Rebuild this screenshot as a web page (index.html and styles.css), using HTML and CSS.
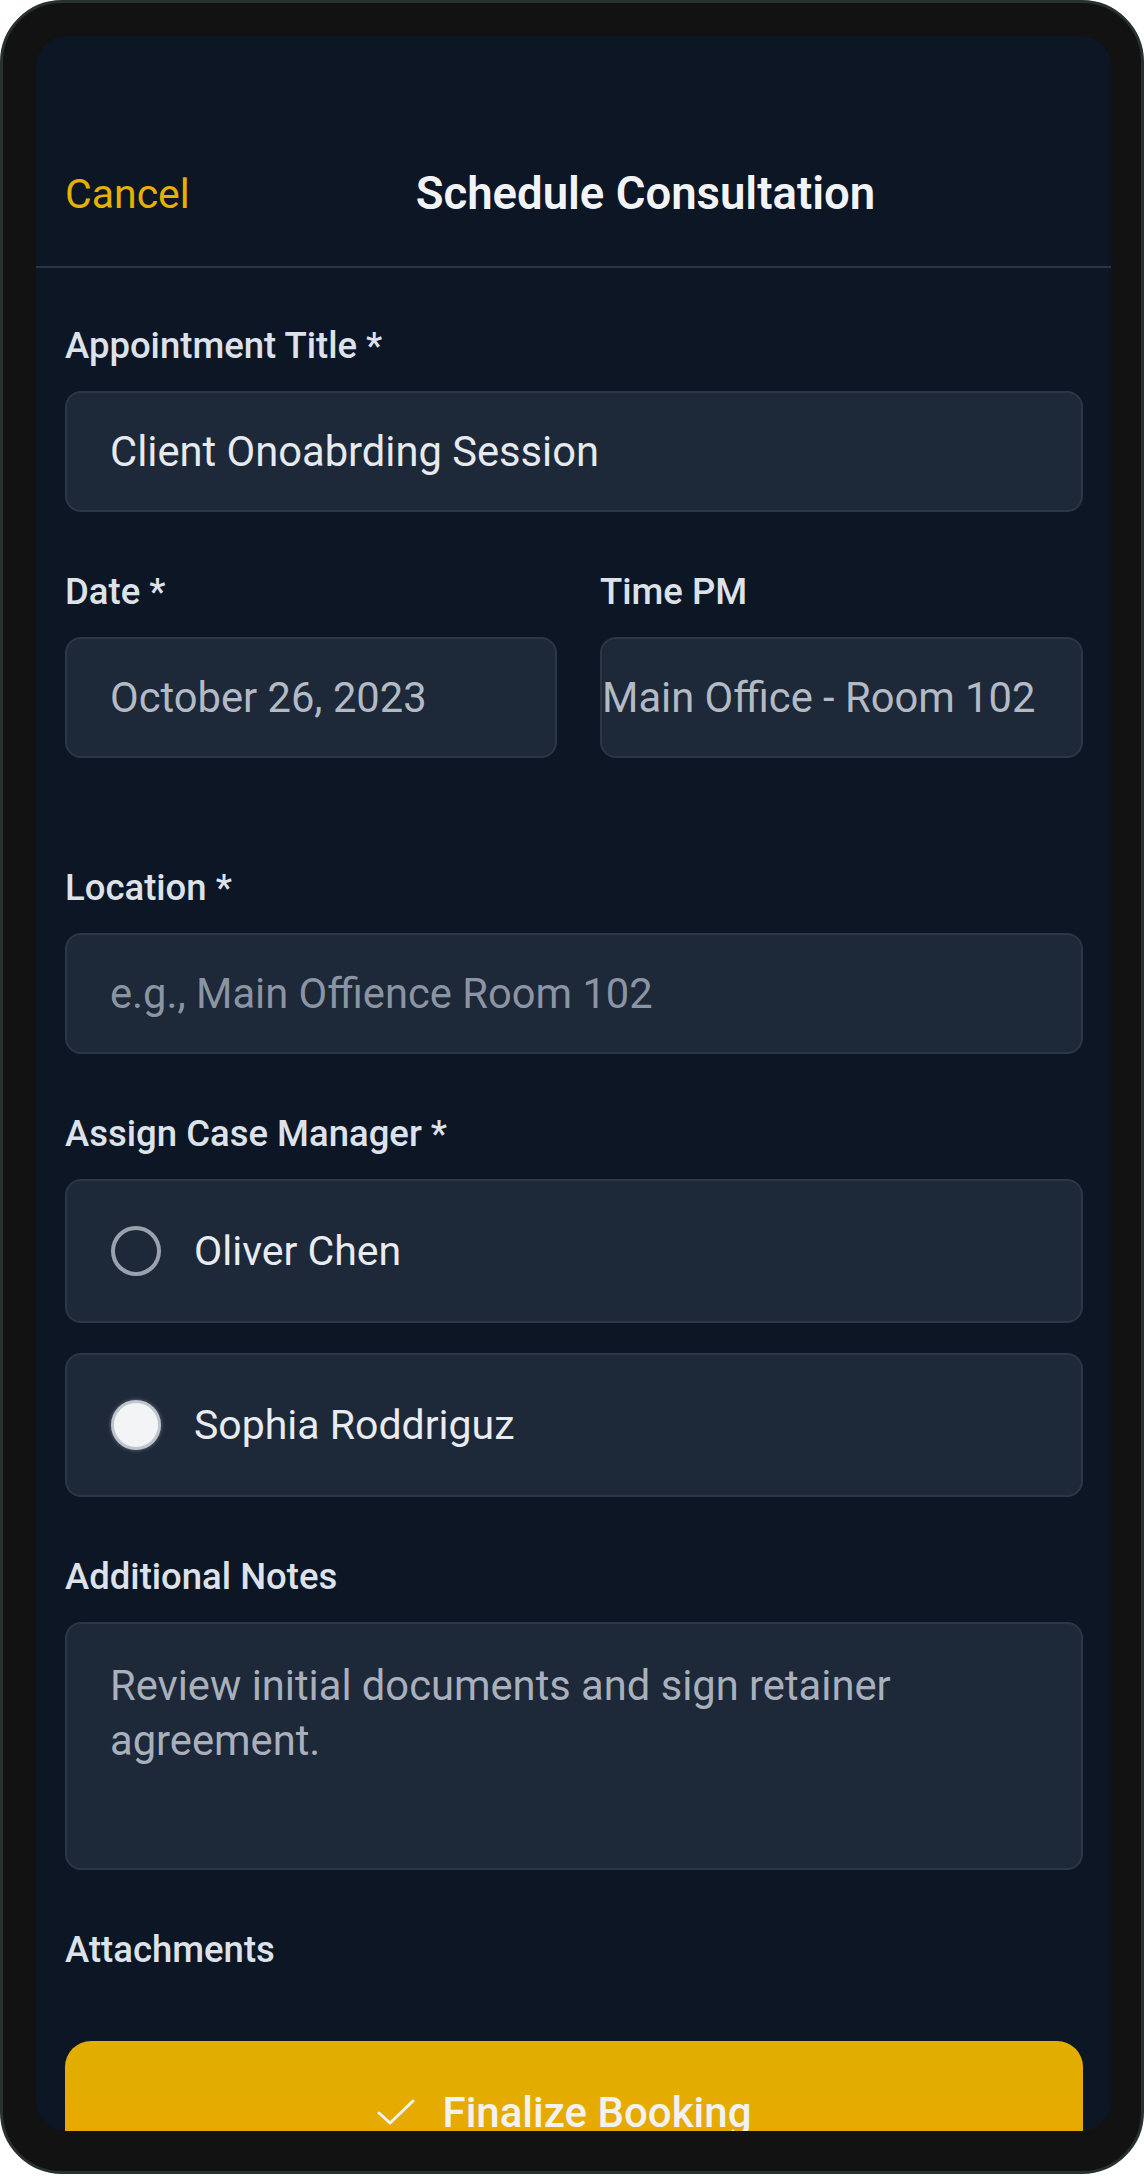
FILE: index.html
```html
<!DOCTYPE html>
<html lang="en">
<head>
    <meta charset="UTF-8">
    <meta name="viewport" content="width=device-width, initial-scale=1.0">
    <title>Schedule Consultation</title>
    <link rel="stylesheet" href="styles.css">
</head>
<body>
    <div class="device">
        <div class="screen">
            <div class="top-bar">
                <span class="cancel">Cancel</span>
                <span class="top-title">Schedule Consultation</span>
            </div>

            <form class="form">
                <div class="field">
                    <label class="form-label" for="title">Appointment Title *</label>
                    <input type="text" id="title" class="form-input" value="Client Onoabrding Session">
                </div>

                <div class="field-row">
                    <div>
                        <label class="form-label" for="date">Date *</label>
                        <input type="text" id="date" class="form-input muted" value="October 26, 2023">
                    </div>
                    <div>
                        <label class="form-label" for="time">Time PM</label>
                        <input type="text" id="time" class="form-input muted flush" value="Main Office - Room 102">
                    </div>
                </div>

                <div class="field">
                    <label class="form-label" for="location">Location *</label>
                    <input type="text" id="location" class="form-input" placeholder="e.g., Main Offience Room 102">
                </div>

                <div class="field">
                    <div class="form-label">Assign Case Manager *</div>
                    <div class="option-list">
                        <div class="option">
                            <span class="radio"></span>
                            <span class="option-name">Oliver Chen</span>
                        </div>
                        <div class="option">
                            <span class="radio checked"></span>
                            <span class="option-name">Sophia Roddriguz</span>
                        </div>
                    </div>
                </div>

                <div class="field">
                    <label class="form-label" for="notes">Additional Notes</label>
                    <textarea id="notes" class="form-input notes">Review initial documents and sign retainer agreement.</textarea>
                </div>

                <div class="form-label">Attachments</div>

                <button type="button" class="submit-button">
                    <svg width="38" height="26" viewBox="0 0 38 26">
                        <polyline points="2,14 13,24 36,2" fill="none" stroke="#f2f2f2" stroke-width="3" stroke-linecap="round" stroke-linejoin="round"/>
                    </svg>
                    Finalize Booking
                </button>
            </form>
        </div>
    </div>
</body>
</html>
```

FILE: styles.css
```css
* {
    margin: 0;
    padding: 0;
    box-sizing: border-box;
}

body {
    font-family: Roboto, 'Noto Sans', sans-serif;
    background: #ffffff;
}

.device {
    width: 1144px;
    height: 2174px;
    background: #121212;
    border: 3px solid #283030;
    border-radius: 62px;
    padding: 33px 30px 40px 33px;
}

.screen {
    height: 100%;
    background: #0c1624;
    border-radius: 30px;
    overflow: hidden;
}

.top-bar {
    height: 232px;
    display: flex;
    align-items: flex-end;
    padding: 0 10px 47px 29px;
    border-bottom: 2px solid #2a3444;
}

.cancel {
    font-size: 41px;
    line-height: 50px;
    color: #e5b100;
}

.top-title {
    flex: 1;
    text-align: center;
    font-size: 45.5px;
    font-weight: 600;
    line-height: 50px;
    color: #f1f3f6;
}

.form {
    padding: 56px 28px 0 29px;
}

.field {
    margin-bottom: 58px;
}

.field-row {
    display: grid;
    grid-template-columns: 492px 1fr;
    gap: 43px;
    margin-bottom: 108px;
}

.form-label {
    display: block;
    font-size: 36.5px;
    font-weight: 500;
    line-height: 44px;
    margin-bottom: 23px;
    color: #dde2ea;
}

.form-input {
    display: block;
    width: 100%;
    height: 121px;
    padding: 0 43px;
    background: #1d2839;
    border: 2px solid #2b3747;
    border-radius: 16px;
    color: #e6e9ee;
    font-family: Roboto, 'Noto Sans', sans-serif;
    font-size: 41.7px;
    outline: none;
}

.form-input::placeholder {
    color: #8b94a2;
}

.form-input.muted {
    color: #b4bac4;
}

.form-input.flush {
    padding: 0;
}

.option-list {
    display: flex;
    flex-direction: column;
    gap: 30px;
}

.option {
    height: 144px;
    display: flex;
    align-items: center;
    gap: 33px;
    padding-left: 44px;
    background: #1d2839;
    border: 2px solid #2b3747;
    border-radius: 16px;
}

.radio {
    width: 50px;
    height: 50px;
    border: 4px solid #9aa2ae;
    border-radius: 50%;
}

.radio.checked {
    background: #f3f4f6;
    border: 3px solid #bfc5cf;
    box-shadow: 0 0 4px rgba(255, 255, 255, 0.35);
}

.option-name {
    font-size: 41px;
    color: #e8ebf0;
}

.notes {
    height: 248px;
    padding: 34px 43px;
    line-height: 55px;
    color: #a9b0bb;
    resize: none;
}

.submit-button {
    width: 100%;
    height: 142px;
    margin-top: 69px;
    padding-right: 20px;
    display: flex;
    align-items: center;
    justify-content: center;
    gap: 28px;
    background: linear-gradient(#e0af00, #eba600);
    border: none;
    border-radius: 26px;
    color: #f2f2f2;
    font-family: Roboto, 'Noto Sans', sans-serif;
    font-size: 42px;
    font-weight: 500;
}
```
